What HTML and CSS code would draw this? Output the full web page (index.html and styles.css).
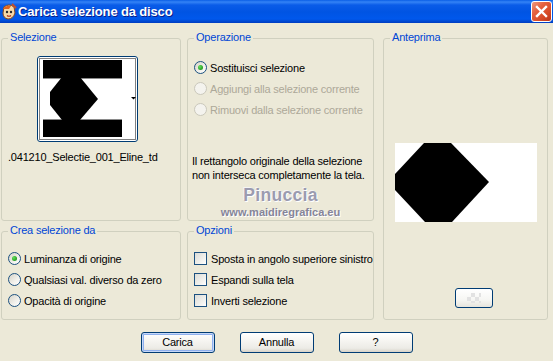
FILE: index.html
```html
<!DOCTYPE html>
<html lang="it">
<head>
<meta charset="utf-8">
<title>Carica selezione da disco</title>
<link rel="stylesheet" href="styles.css">
</head>
<body>
<div class="titlebar">
  <svg class="app-icon" width="16" height="18" viewBox="0 0 16 18">
    <path d="M3 4 Q8 0 13 4 L14 10 Q12 16 7 16 Q2 15 2 10 Z" fill="#f6d9a8" stroke="#8a4a1a" stroke-width="1"/>
    <path d="M2 6 Q5 2 10 3 L8 6 Z" fill="#e0641e"/>
    <circle cx="6" cy="9" r="1.2" fill="#2a2a2a"/>
    <circle cx="10" cy="9" r="1.2" fill="#2a2a2a"/>
    <path d="M6 12.5 Q8 14 10 12.5" stroke="#b02a10" stroke-width="1.2" fill="none"/>
    <path d="M11 1 L15 5" stroke="#c0502a" stroke-width="2"/>
  </svg>
  <span class="title">Carica selezione da disco</span>
  <div class="close">
    <svg width="19" height="19" viewBox="0 0 19 19">
      <path d="M5 5 L14 14 M14 5 L5 14" stroke="#fff" stroke-width="2.4" stroke-linecap="square"/>
    </svg>
  </div>
</div>

<div class="main">
  <section class="group g-sel">
    <span class="legend">Selezione</span>
    <div class="thumb-btn">
      <svg width="99" height="84" viewBox="0 0 99 84">
        <rect x="5" y="3" width="88" height="79" fill="#fff"/>
        <rect x="5" y="3" width="79" height="18" fill="#000"/>
        <rect x="5" y="21" width="79" height="1" fill="#8a8a8a"/>
        <rect x="5" y="63" width="79" height="17" fill="#000"/>
        <rect x="5" y="62" width="79" height="1" fill="#8a8a8a"/>
        <polygon points="24,20 42,20 60,42 42,63 24,63 12,48 12,35" fill="#000"/>
        <polygon points="93,40 98,40 95.5,42.5" fill="#000"/>
        <rect x="1.5" y="1.5" width="96" height="81" fill="none" stroke="#000" stroke-width="1" stroke-dasharray="1,1"/>
      </svg>
    </div>
    <div class="filename">.041210_Selectie_001_Eline_td</div>
  </section>

  <section class="group g-op">
    <span class="legend">Operazione</span>
    <div class="op-list">
      <div class="opt"><span class="radio checked"></span><span>Sostituisci selezione</span></div>
      <div class="opt disabled"><span class="radio"></span><span>Aggiungi alla selezione corrente</span></div>
      <div class="opt disabled"><span class="radio"></span><span>Rimuovi dalla selezione corrente</span></div>
    </div>
    <p class="note">Il rettangolo originale della selezione<br>non interseca completamente la tela.</p>
    <div class="wm-name">Pinuccia</div>
    <div class="wm-url">www.maidiregrafica.eu</div>
  </section>

  <section class="group g-prev">
    <span class="legend">Anteprima</span>
    <svg class="preview" width="142" height="79" viewBox="0 0 142 79">
      <rect width="142" height="79" fill="#fff"/>
      <polygon points="29,0 56,0 94,39 57,79 30,79 0,47 0,31" fill="#000"/>
    </svg>
    <div class="small-btn"><span class="checker"></span></div>
  </section>

  <section class="group g-crea">
    <span class="legend">Crea selezione da</span>
    <div class="crea-list">
      <div class="opt"><span class="radio checked"></span><span>Luminanza di origine</span></div>
      <div class="opt"><span class="radio"></span><span>Qualsiasi val. diverso da zero</span></div>
      <div class="opt"><span class="radio"></span><span>Opacità di origine</span></div>
    </div>
  </section>

  <section class="group g-opt">
    <span class="legend">Opzioni</span>
    <div class="opt-list">
      <div class="opt cb"><span class="check"></span><span>Sposta in angolo superiore sinistro</span></div>
      <div class="opt cb"><span class="check"></span><span>Espandi sulla tela</span></div>
      <div class="opt cb"><span class="check"></span><span>Inverti selezione</span></div>
    </div>
  </section>
</div>

<div class="buttons">
  <div class="btn default">Carica</div>
  <div class="btn">Annulla</div>
  <div class="btn">?</div>
</div>
</body>
</html>
```

FILE: styles.css
```css
* { box-sizing: border-box; }
html, body { margin: 0; padding: 0; }
body {
  width: 553px;
  height: 361px;
  overflow: hidden;
  background: #ece9d8;
  font-family: "Liberation Sans", Arial, sans-serif;
  font-size: 11px;
  letter-spacing: -0.2px;
  color: #000;
}

/* Title bar */
.titlebar {
  height: 23px;
  display: flex;
  align-items: flex-start;
  background: linear-gradient(to bottom, #0a5ee6 0px, #3483f6 2px, #0a5ce8 5px, #0054e3 12px, #0058ec 19px, #004ad4 21px, #003cc0 23px);
}
.app-icon { margin: 3px 0 0 1px; flex: none; }
.title {
  margin: 4px 0 0 1px;
  color: #fff;
  font-weight: bold;
  font-size: 13px;
  letter-spacing: -0.15px;
  line-height: 15px;
  text-shadow: 1px 1px 0 #0a1e8a;
}
.close {
  margin: 1px 1px 0 auto;
  width: 21px;
  height: 21px;
  border: 1px solid #fff;
  border-radius: 3px;
  background: linear-gradient(135deg, #ef9a80 0%, #e5613f 35%, #d64a26 70%, #b8351a 100%);
  display: flex;
  align-items: center;
  justify-content: center;
}

/* Main grid */
.main {
  padding: 15px 0 0 1px;
  display: grid;
  grid-template-columns: 180px 187px 168px;
  grid-template-rows: 183px 89px;
  grid-template-areas:
    "sel op prev"
    "crea opt prev";
  column-gap: 6px;
  row-gap: 10px;
}
.g-sel { grid-area: sel; }
.g-op { grid-area: op; }
.g-prev { grid-area: prev; margin-left: 3px; }
.g-crea { grid-area: crea; }
.g-opt { grid-area: opt; }

.group {
  border: 1px solid #d0d0bf;
  border-radius: 3px;
}
.legend {
  display: block;
  width: max-content;
  margin: -8px 0 0 6px;
  padding: 0 2px;
  background: #ece9d8;
  color: #0046d5;
  line-height: 13px;
}

/* Selezione */
.thumb-btn {
  margin: 12px 0 0 35px;
  width: 101px;
  height: 86px;
  border: 1px solid #003c74;
  border-radius: 3px;
  background: #fff;
  display: flex;
}
.filename {
  margin-top: 9px;
  padding-left: 6px;
  line-height: 13px;
}

/* options */
.opt {
  display: flex;
  align-items: center;
  height: 21px;
  gap: 3px;
}
.opt.cb { gap: 4px; }
.opt.disabled { color: #aca899; }
.radio {
  flex: none;
  width: 13px;
  height: 13px;
  border: 1px solid #1c5180;
  border-radius: 50%;
  background: linear-gradient(135deg, #d6d3c8 0%, #f2f1ec 60%, #fff 100%);
  display: flex;
  align-items: center;
  justify-content: center;
}
.radio.checked::after {
  content: "";
  width: 5px;
  height: 5px;
  border-radius: 50%;
  background: radial-gradient(circle at 35% 35%, #63e05c 0%, #2ea62a 60%, #1c8c1a 100%);
}
.opt.disabled .radio {
  border-color: #cac8bb;
  background: #f4f3ee;
}
.check {
  flex: none;
  width: 13px;
  height: 13px;
  border: 1px solid #1c5180;
  background: linear-gradient(135deg, #dcdcd7 0%, #f0f0ec 60%, #fff 100%);
}

.op-list { margin: 13px 0 0 6px; }
.note {
  margin: 34px 0 0 4px;
  line-height: 14px;
}
.wm-name {
  margin-top: 3px;
  text-align: center;
  font-size: 17.5px;
  font-weight: bold;
  letter-spacing: 0.3px;
  line-height: 20px;
  color: #9b9bb0;
  text-shadow: 1px 1px 0 #fff, -1px -1px 0 #f4f4f4;
}
.wm-url {
  margin-top: 1px;
  text-align: center;
  font-size: 11px;
  font-weight: bold;
  letter-spacing: 0;
  line-height: 13px;
  color: #85859a;
  text-shadow: 1px 1px 0 #fff;
}

/* Anteprima */
.preview {
  display: block;
  margin: 99px 0 0 11px;
}
.small-btn {
  margin: 66px 0 0 71px;
  width: 38px;
  height: 20px;
  border: 1px solid #003c74;
  border-radius: 3px;
  background: linear-gradient(#fff 0%, #f6f6f3 60%, #e6e4dc 100%);
  display: flex;
  align-items: center;
  justify-content: center;
}
.checker {
  width: 14px;
  height: 10px;
  background:
    linear-gradient(45deg, #e2e2e2 25%, transparent 25%, transparent 75%, #e2e2e2 75%),
    linear-gradient(45deg, #e2e2e2 25%, transparent 25%, transparent 75%, #e2e2e2 75%);
  background-size: 8px 8px;
  background-position: 0 0, 4px 4px;
}

/* Crea / Opzioni */
.crea-list { margin: 11px 0 0 6px; }
.opt-list { margin: 11px 0 0 6px; }

/* Bottom buttons */
.buttons {
  margin-top: 12px;
  display: flex;
  justify-content: center;
  gap: 25px;
}
.btn {
  width: 74px;
  height: 21px;
  border: 1px solid #003c74;
  border-radius: 3px;
  background: linear-gradient(#ffffff 0%, #f5f4f0 45%, #ecebe6 80%, #d8d3c8 100%);
  display: flex;
  align-items: center;
  justify-content: center;
  line-height: 13px;
}
.btn.default {
  box-shadow: inset 0 0 0 1px #c6d8f8, inset 0 0 0 2px #8fb0ee;
}
```
